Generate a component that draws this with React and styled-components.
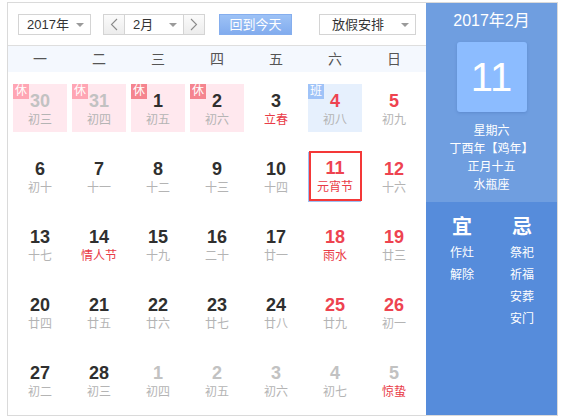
import styled, { createGlobalStyle } from "styled-components";

const GlobalStyle = createGlobalStyle`
    body {
        margin: 0;
        background: #fff;
        font-family: "Liberation Sans", "Noto Sans CJK SC", sans-serif;
    }
`;

const RED = "#ee4350";

const weekdays = ["一", "二", "三", "四", "五", "六", "日"];

// kind: "off" = 休, "work" = 班; other = day from another month
const days = [
    { d: 30, l: "初三", kind: "off", other: true },
    { d: 31, l: "初四", kind: "off", other: true },
    { d: 1, l: "初五", kind: "off" },
    { d: 2, l: "初六", kind: "off" },
    { d: 3, l: "立春", fest: true },
    { d: 4, l: "初八", kind: "work" },
    { d: 5, l: "初九" },
    { d: 6, l: "初十" },
    { d: 7, l: "十一" },
    { d: 8, l: "十二" },
    { d: 9, l: "十三" },
    { d: 10, l: "十四" },
    { d: 11, l: "元宵节", fest: true, today: true },
    { d: 12, l: "十六" },
    { d: 13, l: "十七" },
    { d: 14, l: "情人节", fest: true },
    { d: 15, l: "十九" },
    { d: 16, l: "二十" },
    { d: 17, l: "廿一" },
    { d: 18, l: "雨水", fest: true },
    { d: 19, l: "廿三" },
    { d: 20, l: "廿四" },
    { d: 21, l: "廿五" },
    { d: 22, l: "廿六" },
    { d: 23, l: "廿七" },
    { d: 24, l: "廿八" },
    { d: 25, l: "廿九" },
    { d: 26, l: "初一" },
    { d: 27, l: "初二" },
    { d: 28, l: "初三" },
    { d: 1, l: "初四", other: true },
    { d: 2, l: "初五", other: true },
    { d: 3, l: "初六", other: true },
    { d: 4, l: "初七", other: true },
    { d: 5, l: "惊蛰", fest: true, other: true },
];

const Chevron = ({ dir }) => (
    <svg width="8" height="13" viewBox="0 0 8 13">
        <polyline
            points={dir === "left" ? "7,1 1.5,6.5 7,12" : "1,1 6.5,6.5 1,12"}
            fill="none"
            stroke="#8a8a8a"
            strokeWidth="1.1"
        />
    </svg>
);

export default function App() {
    return (
        <>
            <GlobalStyle />
            <Frame>
                <Main>
                    <Toolbar>
                        <Select $width={73}>
                            2017年
                            <Caret />
                        </Select>
                        <MonthGroup>
                            <NavButton>
                                <Chevron dir="left" />
                            </NavButton>
                            <Select $width={58} $joined>
                                2月
                                <Caret />
                            </Select>
                            <NavButton>
                                <Chevron dir="right" />
                            </NavButton>
                        </MonthGroup>
                        <TodayButton>回到今天</TodayButton>
                        <Select $width={97} $pushRight $pad={12}>
                            放假安排
                            <Caret />
                        </Select>
                    </Toolbar>
                    <WeekHeader>
                        {weekdays.map((w) => (
                            <WeekDay key={w}>{w}</WeekDay>
                        ))}
                    </WeekHeader>
                    <DayGrid>
                        {days.map((day, i) => {
                            const weekend = i % 7 >= 5;
                            let numColor = "#2f2f2f";
                            if (day.other) numColor = "#c2c2c2";
                            else if (weekend) numColor = RED;
                            return (
                                <Cell key={i}>
                                    <DayBox $kind={day.kind} $today={day.today}>
                                        {day.kind && (
                                            <Badge $kind={day.kind} $dim={day.other}>
                                                {day.kind === "off" ? "休" : "班"}
                                            </Badge>
                                        )}
                                        <DayNum $color={numColor}>{day.d}</DayNum>
                                        <Lunar $fest={day.fest}>{day.l}</Lunar>
                                    </DayBox>
                                </Cell>
                            );
                        })}
                    </DayGrid>
                </Main>
                <Side>
                    <SideTop>
                        <SideTitle>2017年2月</SideTitle>
                        <BigDay>11</BigDay>
                        <InfoList>
                            <span>星期六</span>
                            <span>丁酉年【鸡年】</span>
                            <span>正月十五</span>
                            <span>水瓶座</span>
                        </InfoList>
                    </SideTop>
                    <SideBottom>
                        <Almanac>
                            <AlmanacHead>宜</AlmanacHead>
                            <AlmanacItem>作灶</AlmanacItem>
                            <AlmanacItem>解除</AlmanacItem>
                        </Almanac>
                        <Almanac>
                            <AlmanacHead>忌</AlmanacHead>
                            <AlmanacItem>祭祀</AlmanacItem>
                            <AlmanacItem>祈福</AlmanacItem>
                            <AlmanacItem>安葬</AlmanacItem>
                            <AlmanacItem>安门</AlmanacItem>
                        </Almanac>
                    </SideBottom>
                </Side>
            </Frame>
        </>
    );
}

const Frame = styled.div`
    display: flex;
    width: 551px;
    height: 414px;
    box-sizing: border-box;
    margin: 2px 0 0 7px;
    border: 1px solid #dadada;
`;

const Main = styled.div`
    width: 418px;
    display: flex;
    flex-direction: column;
`;

const Toolbar = styled.div`
    height: 42px;
    border-bottom: 1px solid #dedede;
    display: flex;
    align-items: center;
    padding: 0 10px;
`;

const Select = styled.div`
    position: relative;
    box-sizing: border-box;
    width: ${(p) => p.$width}px;
    height: 21px;
    border: 1px solid #d4d4d4;
    ${(p) => p.$joined && "border-left: none; border-right: none;"}
    background: #fff;
    padding-left: ${(p) => p.$pad || 8}px;
    margin-left: ${(p) => (p.$pushRight ? "auto" : "0")};
    font-size: 13px;
    line-height: 19px;
    color: #333;
`;

const Caret = styled.span`
    position: absolute;
    right: 6px;
    top: 8px;
    width: 0;
    height: 0;
    border-left: 4px solid transparent;
    border-right: 4px solid transparent;
    border-top: 4px solid #9a9a9a;
`;

const MonthGroup = styled.div`
    display: flex;
    margin-left: 12px;
`;

const NavButton = styled.div`
    box-sizing: border-box;
    width: 22px;
    height: 21px;
    border: 1px solid #d4d4d4;
    background: linear-gradient(#fbfbfb, #ececec);
    display: flex;
    align-items: center;
    justify-content: center;
`;

const TodayButton = styled.div`
    box-sizing: border-box;
    width: 73px;
    height: 21px;
    margin-left: 14px;
    background: linear-gradient(#9dc2f6, #82acee);
    border: 1px solid #85aeee;
    color: #fff;
    font-size: 13px;
    line-height: 19px;
    text-align: center;
`;

const WeekHeader = styled.div`
    height: 26px;
    background: #f4f8fe;
    display: grid;
    grid-template-columns: repeat(7, 1fr);
    padding: 0 2.5px;
`;

const WeekDay = styled.div`
    font-size: 14px;
    line-height: 26px;
    color: #555;
    text-align: center;
`;

const DayGrid = styled.div`
    flex: 1;
    display: grid;
    grid-template-columns: repeat(7, 1fr);
    grid-auto-rows: 68px;
    padding: 2px 2.5px 0;
`;

const Cell = styled.div`
    display: flex;
    align-items: center;
    justify-content: center;
`;

const DayBox = styled.div`
    position: relative;
    box-sizing: border-box;
    width: ${(p) => (p.$today ? 53 : 54)}px;
    height: ${(p) => (p.$today ? 50 : 48)}px;
    padding-top: ${(p) => (p.$today ? 4 : 6)}px;
    display: flex;
    flex-direction: column;
    align-items: center;
    background: ${(p) =>
        p.$kind === "off" ? "#ffe8ee" : p.$kind === "work" ? "#e6f0fd" : "#fff"};
    border: ${(p) => (p.$today ? "2px solid #f43838" : "none")};
    box-shadow: ${(p) => (p.$today ? "-1px 1px 0 #9dbff3" : "none")};
`;

const Badge = styled.span`
    position: absolute;
    left: 0;
    top: 0;
    width: 16px;
    height: 15px;
    font-size: 12px;
    line-height: 15px;
    text-align: center;
    color: #fff;
    background: ${(p) =>
        p.$kind === "work" ? "#9fc3f8" : p.$dim ? "#ffa6b4" : "#f5858f"};
`;

const DayNum = styled.div`
    font-size: 18px;
    font-weight: bold;
    line-height: 22px;
    color: ${(p) => p.$color};
`;

const Lunar = styled.div`
    font-size: 12px;
    line-height: 16px;
    color: ${(p) => (p.$fest ? "#e93b47" : "#b4b4b4")};
    white-space: nowrap;
`;

const Side = styled.div`
    flex: 1;
    display: flex;
    flex-direction: column;
    color: #fff;
`;

const SideTop = styled.div`
    height: 199px;
    box-sizing: border-box;
    background: #6f9ee0;
    padding-top: 8px;
    display: flex;
    flex-direction: column;
    align-items: center;
`;

const SideTitle = styled.div`
    font-size: 16px;
    line-height: 20px;
`;

const BigDay = styled.div`
    width: 70px;
    height: 70px;
    margin-top: 11px;
    border-radius: 3px;
    background: #8cbcff;
    box-shadow: 0 1px 3px rgba(40, 80, 150, 0.25);
    font-size: 40px;
    line-height: 70px;
    text-align: center;
`;

const InfoList = styled.div`
    margin-top: 10px;
    display: flex;
    flex-direction: column;
    align-items: center;
    font-size: 12px;
    line-height: 18px;
`;

const SideBottom = styled.div`
    flex: 1;
    background: #568cdb;
    display: grid;
    grid-template-columns: 1fr 1fr;
    padding: 13px 5px 0 6px;
    align-items: start;
`;

const Almanac = styled.div`
    display: flex;
    flex-direction: column;
    align-items: center;
`;

const AlmanacHead = styled.div`
    font-size: 20px;
    font-weight: bold;
    line-height: 24px;
    margin-bottom: 3px;
`;

const AlmanacItem = styled.div`
    font-size: 12px;
    line-height: 22px;
`;
